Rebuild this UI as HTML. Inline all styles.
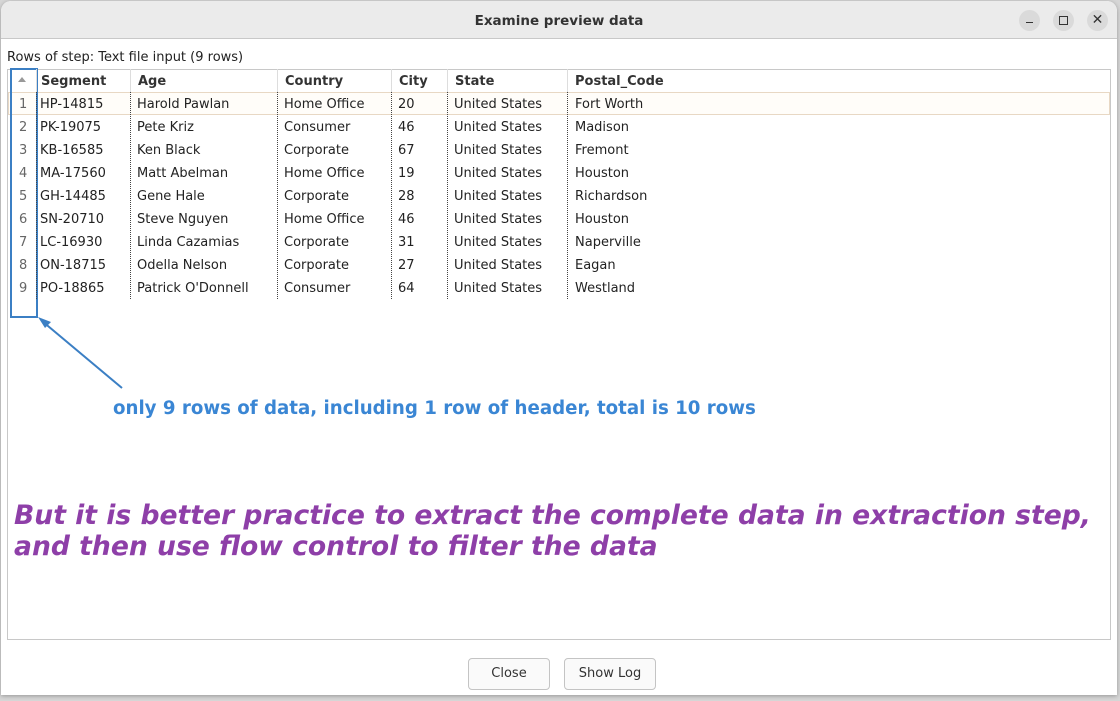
<!DOCTYPE html>
<html><head><style>
body{margin:0;width:1120px;height:701px;background:#d6d6d6;position:relative;overflow:hidden;font-family:"DejaVu Sans","Liberation Sans",sans-serif;}
.win{position:absolute;left:1px;top:1px;width:1116px;height:694px;background:#fff;border-radius:10px 10px 0 0;overflow:hidden;box-shadow:0 1px 4px rgba(0,0,0,.3)}
.tb{position:absolute;left:0;top:0;width:100%;height:37px;background:#ebebeb;border-bottom:1px solid #c8c8c8}
.title{position:absolute;left:0;width:100%;top:12px;text-align:center;font-size:13.5px;font-weight:bold;color:#333}
.wb{position:absolute;top:9px;width:21px;height:21px;border-radius:50%;background:#dadada}
.a{position:absolute;white-space:nowrap;font-size:13px;color:#222}
.frame{position:absolute;left:7px;top:69px;width:1102px;height:569px;border:1px solid #c8c8c8}
.vl{position:absolute;top:92px;height:207px;border-left:1px dotted #444}
.hl{position:absolute;top:69px;height:23px;border-left:1px solid #ddd}
.btn{position:absolute;top:658px;height:30px;border:1px solid #c4c4c4;border-radius:4px;background:#fafafa;font-size:13px;text-align:center;line-height:30px;color:#333}
</style></head><body>
<div class="win">
<div class="tb"><div class="title">Examine preview data</div>
<div class="wb" style="left:1018px"><div style="position:absolute;left:7px;top:12px;width:7px;border-top:1.5px solid #333"></div></div>
<div class="wb" style="left:1052px"><div style="position:absolute;left:6px;top:6px;width:7px;height:7px;border:1.5px solid #333"></div></div>
<div class="wb" style="left:1086px;text-align:center;line-height:21px;font-size:14px;color:#333">✕</div>
</div>
</div>
<div class="a" style="left:7px;top:50px">Rows of step: Text file input (9 rows)</div>
<div class="frame"></div>
<div style="position:absolute;left:8px;top:70px;width:1101px;height:22px;background:#fff;border-bottom:1px solid #ddd"></div>
<div style="position:absolute;left:8px;top:92px;width:1100px;height:21px;border:1px solid #e8d8c4;background:#fffdf9"></div>
<div style="position:absolute;left:10px;top:68px;width:24px;height:246px;border:2px solid #3b7fc4"></div>
<div style="position:absolute;left:18px;top:77px;width:0;height:0;border-left:4px solid transparent;border-right:4px solid transparent;border-bottom:5px solid #999"></div>
<div class="hl" style="left:36px"></div><div class="hl" style="left:130px"></div><div class="hl" style="left:277px"></div><div class="hl" style="left:391px"></div><div class="hl" style="left:447px"></div><div class="hl" style="left:567px"></div>
<div class="vl" style="left:36px"></div><div class="vl" style="left:130px"></div><div class="vl" style="left:277px"></div><div class="vl" style="left:391px"></div><div class="vl" style="left:447px"></div><div class="vl" style="left:567px"></div>
<div class="a" style="top:74px;font-weight:bold;color:#333;left:41px">Segment</div>
<div class="a" style="top:74px;font-weight:bold;color:#333;left:138px">Age</div>
<div class="a" style="top:74px;font-weight:bold;color:#333;left:285px">Country</div>
<div class="a" style="top:74px;font-weight:bold;color:#333;left:399px">City</div>
<div class="a" style="top:74px;font-weight:bold;color:#333;left:455px">State</div>
<div class="a" style="top:74px;font-weight:bold;color:#333;left:575px">Postal_Code</div>
<div id="rows"></div>
<script>
var d=[["HP-14815","Harold Pawlan","Home Office","20","Fort Worth"],["PK-19075","Pete Kriz","Consumer","46","Madison"],["KB-16585","Ken Black","Corporate","67","Fremont"],["MA-17560","Matt Abelman","Home Office","19","Houston"],["GH-14485","Gene Hale","Corporate","28","Richardson"],["SN-20710","Steve Nguyen","Home Office","46","Houston"],["LC-16930","Linda Cazamias","Corporate","31","Naperville"],["ON-18715","Odella Nelson","Corporate","27","Eagan"],["PO-18865","Patrick O'Donnell","Consumer","64","Westland"]];
var h="";d.forEach(function(r,i){var t=97+i*23;
h+='<div class="a" style="top:'+t+'px;left:19px;color:#666">'+(i+1)+'</div>';
h+='<div class="a" style="top:'+t+'px;left:40px">'+r[0]+'</div>';
h+='<div class="a" style="top:'+t+'px;left:137px">'+r[1]+'</div>';
h+='<div class="a" style="top:'+t+'px;left:284px">'+r[2]+'</div>';
h+='<div class="a" style="top:'+t+'px;left:398px">'+r[3]+'</div>';
h+='<div class="a" style="top:'+t+'px;left:454px">United States</div>';
h+='<div class="a" style="top:'+t+'px;left:575px">'+r[4]+'</div>';});
document.getElementById("rows").innerHTML=h;
</script>
<svg style="position:absolute;left:0;top:0" width="1120" height="701"><line x1="122" y1="388" x2="42" y2="321" stroke="#3b7fc4" stroke-width="2"/><polygon points="38,317 51,322 45,328" fill="#3b7fc4"/></svg>
<div class="a" style="left:113px;top:398px;font-size:18.2px;font-weight:bold;color:#3a86d4">only 9 rows of data, including 1 row of header, total is 10 rows</div>
<div class="a" style="left:14px;top:500px;font-size:26.6px;font-weight:bold;font-style:italic;color:#8e3fa8;line-height:31px">But it is better practice to extract the complete data in extraction step,<br>and then use flow control to filter the data</div>
<div class="btn" style="left:468px;width:80px">Close</div>
<div class="btn" style="left:564px;width:90px">Show Log</div>
</body></html>
